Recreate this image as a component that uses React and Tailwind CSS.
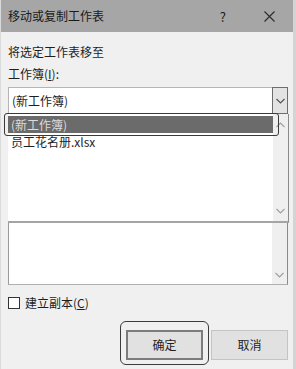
import React from "react";

const font = { fontFamily: '"Noto Sans CJK SC", "Noto Sans", sans-serif' };

function Chevron({ up = false, color = "#a0a0a0" }) {
  return (
    <svg width="9" height="6" viewBox="0 0 9 6" className="block">
      {up ? (
        <polyline points="0.5,5 4.5,1 8.5,5" fill="none" stroke={color} strokeWidth="1.2" />
      ) : (
        <polyline points="0.5,1 4.5,5 8.5,1" fill="none" stroke={color} strokeWidth="1.2" />
      )}
    </svg>
  );
}

export default function App() {
  return (
    <div
      className="relative w-[296px] h-[369px] bg-[#f0f0f0] overflow-hidden text-[12px] text-[#1e1e1e] border-r-[3px] border-r-[#d4d4d4] border-l border-l-[#dadada]"
      style={font}
    >
      {/* Title bar */}
      <div className="h-[32px] bg-[#a6a6a6] flex items-center pl-[7px] pr-[18px] text-[#1a1a1a]">
        <span className="text-[12px] leading-none">移动或复制工作表</span>
        <span className="ml-auto mr-[38px] text-[13px] leading-none">?</span>
        <svg width="11" height="11" viewBox="0 0 11 11">
          <path d="M0.5 0.5 L10.5 10.5 M10.5 0.5 L0.5 10.5" stroke="#2a2a2a" strokeWidth="1.1" />
        </svg>
      </div>

      <div className="pl-[7px] pr-[5px]">
        <div className="mt-[12px] leading-[16px]">将选定工作表移至</div>
        <div className="mt-[6px] leading-[16px]">
          工作簿(<span className="underline">I</span>):
        </div>

        {/* Combo box */}
        <div className="mt-[5px] h-[27px] flex">
          <div className="flex-1 bg-white border border-[#b5b5b5] border-r-0 flex items-center pl-[3px]">
            (新工作簿)
          </div>
          <div className="w-[16px] bg-[#e3e3e3] border border-[#6e6e6e] flex items-center justify-center">
            <Chevron color="#555" />
          </div>
        </div>

        {/* List box (under the dropdown) */}
        <div className="h-[171px] flex bg-white border-l border-l-[#9a9a9a] border-r border-r-[#8a8a8a] border-b border-b-[#b0b0b0]">
          <div className="flex-1" />
          <div className="w-[15px] bg-[#efefef] flex flex-col justify-end items-center pb-[6px]">
            <Chevron />
          </div>
        </div>
      </div>

      {/* Dropdown list overlay */}
      <div className="absolute left-[7px] top-[114px] w-[281px] h-[109px] bg-white border-r border-r-[#8a8a8a] border-b-2 border-b-[#a4a4a4] flex">
        <div className="flex-1 pt-[2px]">
          <div className="h-[17px] bg-[#6b6b6b] text-[#dcdcdc] flex items-center pl-[3px]">(新工作簿)</div>
          <div className="h-[17px] flex items-center pl-[3px]">员工花名册.xlsx</div>
        </div>
        <div className="w-[15px] bg-[#efefef] flex flex-col justify-between items-center pt-[8px] pb-[7px]">
          <Chevron up />
          <Chevron />
        </div>
      </div>
      {/* Focus rectangle around selected item */}
      <div className="absolute left-[3px] top-[113px] w-[275px] h-[23px] rounded-[3px] border border-[#3a3a3a]" />

      {/* Checkbox */}
      <div className="absolute left-0 top-0" />
      <div className="pl-[7px] mt-[11px] flex items-center h-[14px]">
        <div className="w-[12px] h-[12px] border border-[#333] bg-white" />
        <span className="ml-[5px] leading-none">
          建立副本(<span className="underline">C</span>)
        </span>
      </div>

      {/* Buttons */}
      <div className="flex justify-end pr-[5px] mt-[11px] gap-[2px] items-center">
        <div className="rounded-[6px] border border-[#3c3c3c] p-[5px] pt-[8px] pb-[4px]">
          <div className="w-[77px] h-[30px] bg-[#e1e1e1] border-2 border-[#7c7c7c] flex items-center justify-center">
            确定
          </div>
        </div>
        <div className="w-[77px] h-[30px] bg-[#e1e1e1] border border-[#c4c4c4] flex items-center justify-center self-start mt-[9px]">
          取消
        </div>
      </div>
    </div>
  );
}
